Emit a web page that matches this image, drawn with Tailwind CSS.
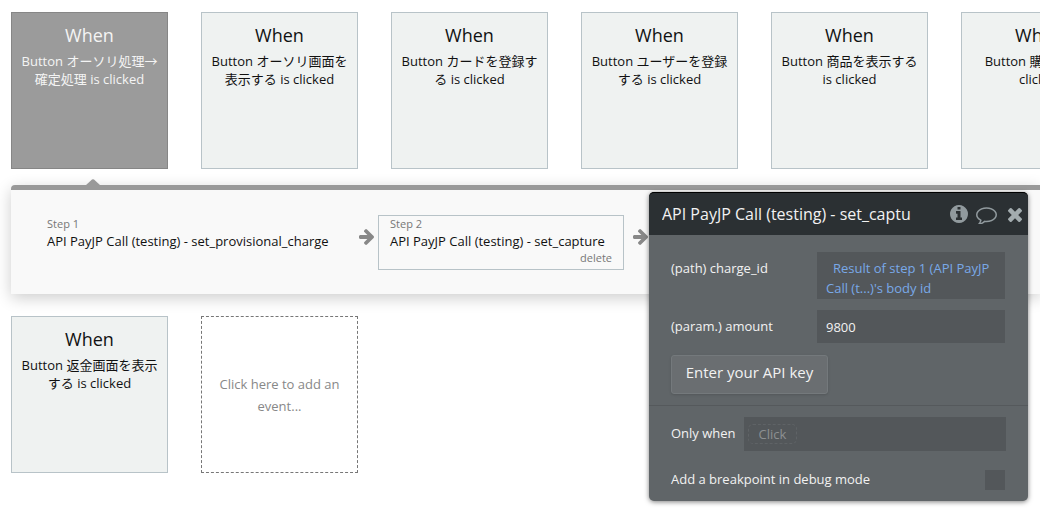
<!DOCTYPE html>
<html lang="ja">
<head>
    <meta charset="UTF-8">
    <meta name="viewport" content="width=device-width, initial-scale=1.0">
    <title>Workflow editor</title>
    <script src="https://cdn.jsdelivr.net/npm/@tailwindcss/browser@4"></script>
</head>
<body class="min-h-screen overflow-x-hidden bg-white font-['Open_Sans','Noto_Sans_CJK_JP',sans-serif] text-[13px] text-[#111]">

    <main class="relative overflow-x-clip pt-3 pb-9 pl-[11px]">

        <!-- Events, first row -->
        <section class="flex gap-[33px]" aria-label="Events">
            <button class="flex size-[157px] shrink-0 flex-col items-center border border-[#868686] bg-[#9b9b9b] px-[6px] pt-2 text-[#f4f4f4]">
                <span class="text-lg leading-7">When</span>
                <span class="mt-[3px] leading-[18px]">Button オーソリ処理→確定処理 is clicked</span>
            </button>
            <button class="flex size-[157px] shrink-0 flex-col items-center border border-[#b8c3c8] bg-[#eff2f1] px-[6px] pt-2">
                <span class="text-lg leading-7">When</span>
                <span class="mt-[3px] leading-[18px]">Button オーソリ画面を表示する is clicked</span>
            </button>
            <button class="flex size-[157px] shrink-0 flex-col items-center border border-[#b8c3c8] bg-[#eff2f1] px-[6px] pt-2">
                <span class="text-lg leading-7">When</span>
                <span class="mt-[3px] leading-[18px]">Button カードを登録する is clicked</span>
            </button>
            <button class="flex size-[157px] shrink-0 flex-col items-center border border-[#b8c3c8] bg-[#eff2f1] px-[6px] pt-2">
                <span class="text-lg leading-7">When</span>
                <span class="mt-[3px] leading-[18px]">Button ユーザーを登録する is clicked</span>
            </button>
            <button class="flex size-[157px] shrink-0 flex-col items-center border border-[#b8c3c8] bg-[#eff2f1] px-[6px] pt-2">
                <span class="text-lg leading-7">When</span>
                <span class="mt-[3px] leading-[18px]">Button 商品を表示する is clicked</span>
            </button>
            <button class="flex size-[157px] shrink-0 flex-col items-center border border-[#b8c3c8] bg-[#eff2f1] px-[6px] pt-2">
                <span class="text-lg leading-7">When</span>
                <span class="mt-[3px] leading-[18px]">Button 購入する is clicked</span>
            </button>
        </section>

        <!-- Actions of the selected event -->
        <section class="relative mt-4 flex h-[109px] items-start rounded-tl-sm border-t-5 border-[#999] bg-[#f9f9f9] pt-[25px] pl-6 shadow-[0_4px_16px_rgba(0,0,0,0.2)]" aria-label="Actions">
            <svg class="absolute -top-[11px] left-[74px] h-[7px] w-4" viewBox="0 0 16 7" fill="#999"><path d="M0 7 7 .6Q8 0 9 .6L16 7z"/></svg>

            <button class="flex w-[314px] shrink-0 flex-col border border-transparent px-[11px] text-left">
                <span class="text-[11px] leading-4 text-[#777]">Step 1</span>
                <span class="leading-[18px]">API PayJP Call (testing) - set_provisional_charge</span>
            </button>
            <svg class="mt-[14px] mr-1 ml-[10px] h-4 w-[15px] shrink-0" viewBox="0 181 1472 1558" fill="#888"><path d="M1472 960q0 54-37 91l-651 651q-39 37-91 37-51 0-90-37l-75-75q-38-38-38-91t38-91l293-293H117q-52 0-84.500-37.500T0 1024V896q0-53 32.500-90.500T117 768h704L528 474q-38-36-38-90t38-90l75-75q38-38 90-38 53 0 91 38l651 651q37 35 37 90z"/></svg>
            <div class="flex w-[246px] shrink-0 flex-col border border-[#b8c3c8] px-[11px] pb-[3px]">
                <span class="text-[11px] leading-4 text-[#777]">Step 2</span>
                <span class="leading-[18px]">API PayJP Call (testing) - set_capture</span>
                <button class="self-end text-[11px] leading-4 text-[#777]">delete</button>
            </div>
            <svg class="mt-[14px] ml-[9px] h-4 w-[15px] shrink-0" viewBox="0 181 1472 1558" fill="#888"><path d="M1472 960q0 54-37 91l-651 651q-39 37-91 37-51 0-90-37l-75-75q-38-38-38-91t38-91l293-293H117q-52 0-84.500-37.500T0 1024V896q0-53 32.500-90.500T117 768h704L528 474q-38-36-38-90t38-90l75-75q38-38 90-38 53 0 91 38l651 651q37 35 37 90z"/></svg>
        </section>

        <!-- Events, second row -->
        <section class="mt-[22px] flex gap-[33px]" aria-label="More events">
            <button class="flex size-[157px] shrink-0 flex-col items-center border border-[#b8c3c8] bg-[#eff2f1] px-[6px] pt-2">
                <span class="text-lg leading-7">When</span>
                <span class="mt-[3px] leading-[18px]">Button 返金画面を表示する is clicked</span>
            </button>
            <button class="size-[157px] shrink-0 border border-dashed border-[#777] px-3 leading-[22px] text-[#888]">Click here to add an event...</button>
        </section>

        <!-- Property editor -->
        <form class="absolute top-48 left-[649px] w-[379px] rounded-[5px] bg-[#606568] pb-[11px] text-[#f2f2f2] shadow-[0_1px_5px_rgba(0,0,0,0.5)]">
            <header class="flex h-[43px] items-center rounded-t-[5px] border-t border-black bg-[#2b3033] pl-[13px]">
                <h2 class="w-[288px] overflow-hidden text-base whitespace-nowrap">API PayJP Call (testing) - set_captu</h2>
                <button type="button" aria-label="Info" class="shrink-0">
                    <svg class="size-[18px]" viewBox="128 128 1536 1536" fill="#919a9e"><path d="M1152 1376v-160q0-14-9-23t-23-9h-96v-512q0-14-9-23t-23-9h-320q-14 0-23 9t-9 23v160q0 14 9 23t23 9h96v320h-96q-14 0-23 9t-9 23v160q0 14 9 23t23 9h448q14 0 23-9t9-23zm-128-896v-160q0-14-9-23t-23-9h-192q-14 0-23 9t-9 23v160q0 14 9 23t23 9h192q14 0 23-9t9-23zm640 416q0 209-103 385.500t-279.500 279.500-385.500 103-385.500-103-279.500-279.500-103-385.500 103-385.500 279.500-279.500 385.500-103 385.500 103 279.500 279.500 103 385.500z"/></svg>
                </button>
                <button type="button" aria-label="Comment" class="ml-2 shrink-0 pt-[3px]">
                    <svg class="h-[17px] w-[21px]" viewBox="0 256 1792 1408" fill="#919a9e"><path d="M896 384q-204 0-381.500 69.500t-282 187.500-104.500 255q0 112 71.500 213.500t201.500 175.500l87 50-27 96q-24 91-70 172 152-63 275-171l43-38 57 6q69 8 130 8 204 0 381.500-69.500t282-187.500 104.500-255-104.500-255-282-187.500-381.500-69.500zm896 512q0 174-120 321.500t-326 233-450 85.500q-70 0-145-8-198 175-460 242-49 14-114 22h-5q-15 0-27-10.500t-16-27.500v-1q-3-4-.5-12t2-10 4.500-9.500l6-9 7-8.500 8-9q7-8 31-34.500t34.500-38 31-39.500 32.500-51 27-59 26-76q-157-89-247.500-220t-90.500-281q0-174 120-321.500t326-233 450-85.500 450 85.500 326 233 120 321.500z"/></svg>
                </button>
                <button type="button" aria-label="Close" class="ml-[11px] shrink-0 pt-[2px]">
                    <svg class="size-[14px]" viewBox="302 302 1188 1188" fill="#a3acaf"><path d="M1490 1322q0 40-28 68l-136 136q-28 28-68 28t-68-28l-294-294-294 294q-28 28-68 28t-68-28l-136-136q-28-28-28-68t28-68l294-294-294-294q-28-28-28-68t28-68l136-136q28-28 68-28t68 28l294 294 294-294q28-28 68-28t68 28l136 136q28 28 28 68t-28 68l-294 294 294 294q28 28 28 68z" transform="translate(0 -64)"/></svg>
                </button>
            </header>

            <div class="px-[22px] pt-[17px] pb-[11px]">
                <div class="flex items-start justify-between">
                    <label for="charge-id" class="pt-[6px] leading-5">(path) charge_id</label>
                    <button id="charge-id" type="button" class="mr-[1px] w-[188px] bg-[#53575a] pt-[6px] pr-2 pb-[1px] pl-[9px] text-left indent-[7px] leading-5 text-[#79a9e8]">Result of step 1 (API PayJP Call (t...)'s body id</button>
                </div>
                <div class="mt-[11px] flex items-center justify-between">
                    <label for="amount">(param.) amount</label>
                    <input id="amount" type="text" value="9800" class="mr-[1px] h-[33px] w-[188px] bg-[#53575a] px-[9px]">
                </div>
                <button type="button" class="mt-3 h-[39px] w-[157px] rounded-[3px] border border-[#74797c] bg-[#6a6e71] pb-1 text-[15px] shadow-sm">Enter your API key</button>
            </div>

            <div class="border-t border-[#55595c] px-[22px] pt-[11px]">
                <div class="flex items-center gap-2">
                    <label for="only-when" class="shrink-0">Only when</label>
                    <button id="only-when" type="button" class="flex h-[34px] grow items-center bg-[#53575a] px-1">
                        <span class="rounded-[5px] border border-dashed border-[#5f6366] px-[10px] leading-[18px] text-[#8d9092]">Click</span>
                    </button>
                </div>
                <div class="mt-[19px] flex items-center justify-between">
                    <label for="breakpoint">Add a breakpoint in debug mode</label>
                    <input id="breakpoint" type="checkbox" class="mr-[1px] size-5 appearance-none bg-[#53575a]">
                </div>
            </div>
        </form>
    </main>

</body>
</html>
